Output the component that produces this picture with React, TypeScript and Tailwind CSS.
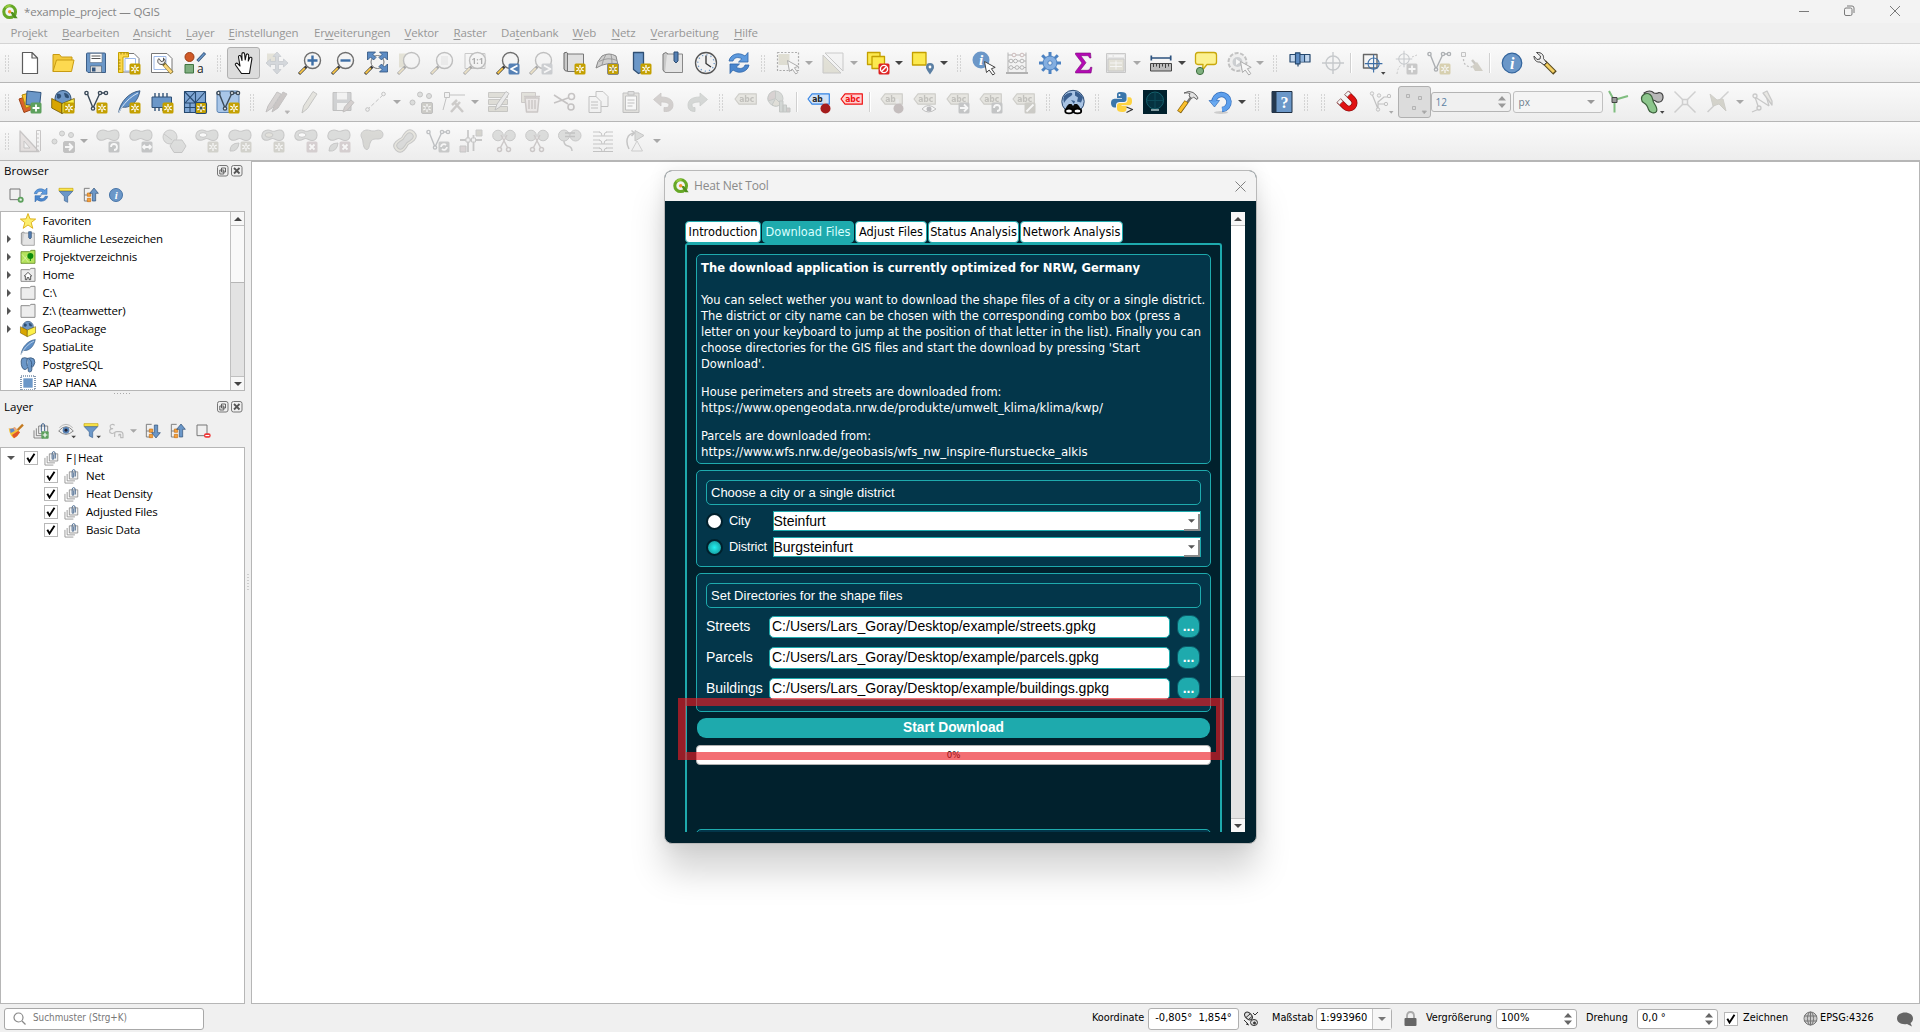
import React from "react";
import type { ReactNode } from "react";

/* ---------- icon primitives ---------- */

function Svg({ children, s = 24 }: { children?: ReactNode; s?: number }) {
  return (
    <svg width={s} height={s} viewBox="0 0 24 24" fill="none" strokeLinejoin="round" className="shrink-0 overflow-visible">
      {children}
    </svg>
  );
}

const Star = ({ c = "#c4a000" }: { c?: string }) => (
  <g>
    <rect x="12.5" y="12.5" width="11" height="11" rx="1.5" fill={c} />
    <path d="M18 14v8M14.3 16l7.4 4M21.7 16l-7.4 4" stroke="#fff" strokeWidth="1.3" />
    <circle cx="18" cy="18" r="1" fill={c} />
  </g>
);
const Badge = ({ c, d }: { c: string; d: string }) => (
  <g>
    <rect x="12.5" y="12.5" width="11" height="11" rx="1.5" fill={c} />
    <path d={d} stroke="#fff" strokeWidth="1.8" />
  </g>
);
const Lens = ({ children }: { children?: ReactNode }) => (
  <g>
    <path d="M1 23l7.5-7.5" stroke="#3a3a3a" strokeWidth="3" />
    <path d="M1.6 22.4l5.2-5.2" stroke="#fcc94a" strokeWidth="1.8" />
    <circle cx="14.5" cy="9.5" r="8" fill="#f4f4f4" stroke="#6e6e6e" strokeWidth="1.4" />
    {children}
  </g>
);
const Blob = () => (
  <path
    d="M.8 7C.8 3.500 3.500 1 7 1c2.500 0 3.500 1.200 5.500 1.200S16 1 18.500 1C21.500 1 23 3.500 23 6.200c0 3.300-2.300 5.300-5 5.300-2.800 0-4-2-6.500-2-2 0-3 1.800-5.500 1.800C3 11.300.8 9.800.8 7z"
    fill="#b4b8b4" stroke="#858585" strokeWidth="1.100"
  />
);
const Nodes = () => (
  <g stroke="#3b4a59" strokeWidth="1.4">
    <path d="M3 3l6 15L16 3h6" />
    <g fill="#fff">
      <circle cx="2.500" cy="3" r="1.6" />
      <circle cx="9" cy="18.500" r="1.6" />
      <circle cx="16" cy="3" r="1.6" />
      <circle cx="22" cy="3" r="1.6" />
    </g>
  </g>
);
const Box = () => (
  <g>
    <circle cx="12" cy="8.5" r="8" fill="#6f97c6" stroke="#2f4f74" />
    <path d="M6 4c3-1 5 1 4 3s-3 2-4 1zM13 3c3 0 5 2 5 4s-3 1-4 0z" fill="#2f4f74" />
    <path d="M.7 8.500L11 13.500v10L.7 18z" fill="#d8a500" stroke="#6d5500" strokeWidth=".8" />
    <path d="M23.300 8.500L11 13.500v10L23.300 18z" fill="#fcf04a" stroke="#6d5500" strokeWidth=".8" />
  </g>
);
const Feather = () => (
  <g>
    <path d="M1.500 23C3 12 12 2 23 .8 22 6 20 10 17 13c-4 4-9 5-12 4z" fill="#5f8fc6" stroke="#2f4f74" strokeWidth=".8" />
    <path d="M1.500 23C6 14 13 7 21 3" stroke="#dbe8f6" />
  </g>
);
const Tag = ({ t = "abc", f = "#d4cfb8", s = "#98947f", c = "#78745e" }: { t?: string; f?: string; s?: string; c?: string }) => (
  <g>
    <path d="M1 9l4-5.200h17.300v10.400H5z" fill={f} stroke={s} strokeWidth="1.200" />
    <text x="5.200" y="12" fontSize="8.500" fontWeight="700" fill={c} fontFamily="DejaVu Sans Condensed, sans-serif">{t}</text>
  </g>
);
const Pin = ({ c = "#a51c1c" }: { c?: string }) => (
  <g>
    <path d="M17 9l1.500 8" stroke="#ddd" strokeWidth="3" />
    <circle cx="18.500" cy="18.500" r="5" fill={c} />
  </g>
);
const Cursor = ({ x = 11, y = 9 }: { x?: number; y?: number }) => (
  <path transform={`translate(${x} ${y})`} d="M.5.500l2 11 2.700-2.500 3.600 5 2-1.400-3.400-4.900 3.800-1.300z" fill="#fff" stroke="#444" />
);
const Corner = () => <path d="M20 21h4.500L22.250 23.800z" fill="#444" />;
const Scissor = () => (
  <g stroke="#9a8888" strokeWidth="1.500">
    <circle cx="6" cy="6.500" r="5.300" fill="#b4b8b4" stroke="#858585" strokeWidth="1" />
    <circle cx="18" cy="6.500" r="5.300" fill="#b4b8b4" stroke="#858585" strokeWidth="1" />
    <path d="M8.500 18.500L15 6M15.500 18.500L9 6" />
    <circle cx="7.500" cy="20.500" r="2" />
    <circle cx="16.500" cy="20.500" r="2" />
  </g>
);
const Refresh = () => (
  <g>
    <path d="M2 10c1-6 9-10 16-5l3-3.500V11h-9.500l3.300-3.200C11 5.500 7 6.500 6 10z" fill="#5d9ade" stroke="#2e66aa" strokeWidth=".8" />
    <path d="M22 14c-1 6-9 10-16 5l-3 3.500V13h9.500l-3.300 3.200C13 18.500 17 17.500 18 14z" fill="#4a86cd" stroke="#2e66aa" strokeWidth=".8" />
  </g>
);
const Info = () => (
  <g>
    <circle cx="12" cy="12" r="9.800" fill="#6b97c8" stroke="#31639c" strokeWidth="1.200" />
    <text x="12.200" y="17.600" textAnchor="middle" fontSize="16" fontStyle="italic" fontWeight="700" fill="#fff" fontFamily="Liberation Serif, serif">i</text>
  </g>
);
const Target = ({ c = "#7c8a98" }: { c?: string }) => (
  <g stroke={c} strokeWidth="1.400">
    <circle cx="12" cy="12" r="7" />
    <path d="M12 1v22M1 12h22" />
  </g>
);

const I: Record<string, ReactNode> = {
  newFile: <path d="M4.500 1.500h9.500l5.500 5.500v15.500h-15zM14 1.500V7h5.500" fill="#fff" stroke="#5c5c5c" strokeWidth="1.200" />,
  open: (
    <g stroke="#c89b12" strokeWidth="1">
      <path d="M2 20.500V3.500h6.500l2 2.500H21v4" fill="#f3c93c" />
      <path d="M2 20.500L5.500 9H23l-2.500 11.500z" fill="#fdd950" />
    </g>
  ),
  save: (
    <g>
      <path d="M2.500 3q0-1 1-1h17q1 0 1 1v18.500H4l-1.500-1.500z" fill="#6b97c8" stroke="#3d5f88" />
      <path d="M6 2.500h12v9H6z" fill="#fff" stroke="#5e6f85" strokeWidth=".6" />
      <path d="M7.500 5h9M7.500 7.500h9" stroke="#555" />
      <path d="M6.500 15h11v6.500h-11z" fill="#dedede" stroke="#456" strokeWidth=".6" />
      <path d="M8 16.500h3.500v4H8z" fill="#34557d" />
    </g>
  ),
  layout: (
    <g>
      <path d="M2.500 2.500H17L22 7.500V21H2.500z" fill="#fff" stroke="#777" />
      <path d="M8 7.500h10.500V20H8z" stroke="#9db9e8" />
      <path d="M1.500 1.500h10v4.500h-5.500v15.500h-4.500z" fill="#fcd84a" stroke="#c4a000" />
      <path d="M4 1.500v2M7 1.500v2M10 1.500v2M1.500 9h2M1.500 12h2M1.500 15h2M1.500 18h2" stroke="#8a6d00" strokeWidth=".8" />
      <Star />
    </g>
  ),
  layouts: (
    <g>
      <path d="M1.500 2.500H17L22 7.500V21.500H1.500z" fill="#fff" stroke="#777" />
      <path d="M4 5.500h12v13H4z" stroke="#9db9e8" />
      <path d="M13 12l9 10" stroke="#7a6a2a" strokeWidth="4" />
      <path d="M14.500 14l7 7.500" stroke="#fcd87c" strokeWidth="2.600" />
      <path d="M9 7.500c-2 1.500-1.500 4.500.5 5.500s3.500.5 5-1 .5-4-1-5v3l-2.500.5z" fill="#eee" stroke="#555" />
    </g>
  ),
  style: (
    <g>
      <circle cx="6.500" cy="6" r="4.500" fill="#d05a28" stroke="#9c3c14" />
      <path d="M14.500 10L22 2" stroke="#31547d" strokeWidth="3" />
      <path d="M15 9.500L21.500 2.500" stroke="#6b97c8" strokeWidth="1.500" />
      <path d="M2 13.500h8.500V22H2z" fill="#7fae7f" stroke="#3f7440" />
      <text x="14" y="21.500" fontSize="12" fill="#222" fontFamily="Open Sans, sans-serif">a</text>
    </g>
  ),
  hand: (
    <path
      d="M9.500 22.500l-6-8.500c-.8-1.300 1-2.500 2.200-1.300L8 15 6.500 6c-.2-1.700 2-2.200 2.500-.5L10 9.500 9.900 3c0-1.800 2.500-1.900 2.700 0l.6 6 1-5c.4-1.700 2.700-1.300 2.500.5L16.300 10l1.200-3c.6-1.400 2.700-.8 2.400.8L18.500 16l-1 6.500z"
      fill="#fff" stroke="#111" strokeWidth="1.100"
    />
  ),
  panSel: (
    <g fill="#9fb0c4" stroke="#7c8ea5" strokeWidth=".8">
      <path d="M2 2.500h11.500V14H2z" fill="#cfc89a" stroke="none" />
      <path d="M12 1l4 4.500h-2.500v5h5V8l4.500 4-4.500 4v-2.500h-5v5H16L12 23l-4-4.500h2.500v-5h-5V16L1 12l4.500-4v2.500h5v-5H8z" />
    </g>
  ),
  zoomIn: <Lens><path d="M14.500 4.500v10M9.500 9.500h10" stroke="#3d6ea5" strokeWidth="2.400" /></Lens>,
  zoomOut: <Lens><path d="M9.500 9.500h10" stroke="#3d6ea5" strokeWidth="2.400" /></Lens>,
  zoomFull: (
    <g>
      <path d="M1 23l7.500-7.500" stroke="#3a3a3a" strokeWidth="3" />
      <path d="M1.600 22.400l5.200-5.200" stroke="#fcc94a" strokeWidth="1.800" />
      <circle cx="13.500" cy="11" r="6.500" fill="#f4f4f4" stroke="#777" />
      <g fill="#5d8cc4" stroke="#2d527e" strokeWidth=".8">
        <path d="M3.500 1h8L9 3.500l3 3-2.500 2.500-3-3L3.500 9z" />
        <path d="M23.500 1h-8L18 3.500l-3 3L17.500 9l3-3 3 3z" />
        <path d="M23.500 21h-8L18 18.500l-3-3 2.500-2.500 3 3 3-3z" />
      </g>
    </g>
  ),
  zoomSel: <g><path d="M2 2.500h11v14H2z" fill="#cfc68c" /><Lens /></g>,
  zoomLayer: <Lens><path d="M11 5h7v9h-7z" fill="#ddd" /></Lens>,
  zoomNative: (
    <g>
      <path d="M2 2.500h20v15H2z" stroke="#888" />
      <Lens><text x="14.500" y="13" textAnchor="middle" fontSize="8.500" fontWeight="700" fill="#444" fontFamily="Open Sans, sans-serif">1:1</text></Lens>
    </g>
  ),
  zoomLast: <g><Lens /><Badge c="#5580b4" d="M21.500 14.500L15 18l6.500 3.500" /></g>,
  zoomNext: <g><Lens /><Badge c="#8f9aa8" d="M15 14.500l6.500 3.500-6.500 3.500" /></g>,
  newMap: (
    <g>
      <path d="M2 2q3-2 4 1v17H3.500L2 18z" fill="#c9c9c9" stroke="#666" />
      <path d="M5.500 3h16v17.500h-16z" fill="#e0e0e0" stroke="#777" />
      <Star />
    </g>
  ),
  map3d: (
    <g stroke="#888">
      <path d="M7 5q7-4 14 0l2 9q-10-4-22 3 1-7 6-12z" fill="#cfcfcf" />
      <path d="M4 10.500q9-5 18-1M11 3.500Q8 8 7 14M16 3.500q1 4 1 9" strokeWidth=".7" />
      <Star />
    </g>
  ),
  bookmark: <g><path d="M5.500 1.500h10v19l-5 2-5-4z" fill="#6b97c8" stroke="#2f4f74" strokeWidth="1.300" /><Star /></g>,
  bookmarks: (
    <g>
      <path d="M2 3q3-3 5 0v18H3.500L2 19z" fill="#c9c9c9" stroke="#777" />
      <path d="M6 3h15.500v18.500H4" fill="#e4e4e4" stroke="#888" />
      <path d="M13 1h4v9l-2 2-2-2z" fill="#5580b4" stroke="#2f4f74" />
    </g>
  ),
  clock: (
    <g>
      <circle cx="12" cy="12" r="10.500" fill="#f1f1f1" stroke="#555" strokeWidth="1.300" />
      <circle cx="12" cy="12" r="8.200" stroke="#6b97c8" strokeWidth="1.300" strokeDasharray="1.200 3.100" />
      <path d="M12 4.500V12.500l5 3.500" stroke="#333" strokeWidth="1.300" />
    </g>
  ),
  refresh: <Refresh />,
  select: (
    <g>
      <path d="M1.500 1.500h21v18h-21z" stroke="#444" strokeWidth="1.200" strokeDasharray="2 1.500" />
      <path d="M2.500 3h11v11h-11z" fill="#c6be86" />
      <Cursor />
    </g>
  ),
  selectVal: (
    <g stroke="#888">
      <path d="M2 4v18h18z" fill="#cdc694" />
      <path d="M4 2h18v18z" fill="#f2f2f2" />
    </g>
  ),
  deselect: (
    <g>
      <path d="M1.500 1.500h12.500v12H1.500z" fill="#fce94f" stroke="#c4a000" strokeWidth="1.300" />
      <path d="M6 5.500h12.500v12H6z" fill="#fce94f" stroke="#c4a000" strokeWidth="1.300" />
      <rect x="12.500" y="12.500" width="11" height="11" rx="1.500" fill="#dd2222" />
      <circle cx="18" cy="18" r="3.600" stroke="#fff" strokeWidth="1.400" />
      <path d="M15.500 20.500l5-5" stroke="#fff" strokeWidth="1.400" />
    </g>
  ),
  selectLoc: (
    <g>
      <path d="M1.500 1.500H15v12.500H1.500z" fill="#fce94f" stroke="#c4a000" strokeWidth="1.300" />
      <path d="M19 23.500c-3-4.500-4-5.500-4-7.500a4 4 0 018 0c0 2-1 3-4 7.500z" fill="#5b7fa3" />
      <circle cx="19" cy="16" r="1.400" fill="#fff" />
    </g>
  ),
  identify: (
    <g>
      <circle cx="9" cy="9" r="8.500" fill="#6b97c8" />
      <text x="9" y="14" textAnchor="middle" fontSize="15" fontStyle="italic" fontWeight="700" fill="#fff" fontFamily="Liberation Serif, serif">i</text>
      <Cursor x={12} y={10} />
    </g>
  ),
  abacus: (
    <g stroke="#555">
      <path d="M3 1.500v20M21 1.500v20M3 4h18M3 10h18M3 16.500h18" />
      <path d="M1 22h22" strokeWidth="2" />
      <g fill="#f4f4f4">
        <ellipse cx="9" cy="4" rx="2" ry="1.800" stroke="#a55" /><ellipse cx="17" cy="4" rx="2" ry="1.800" stroke="#a55" />
        <ellipse cx="6" cy="10" rx="2" ry="1.800" /><ellipse cx="10.500" cy="10" rx="2" ry="1.800" /><ellipse cx="17" cy="10" rx="2" ry="1.800" />
        <ellipse cx="6" cy="16.500" rx="2" ry="1.800" /><ellipse cx="12" cy="16.500" rx="2" ry="1.800" /><ellipse cx="17" cy="16.500" rx="2" ry="1.800" />
      </g>
    </g>
  ),
  gear: (
    <g>
      <path d="M12 1v22M1 12h22M4.200 4.200l15.600 15.600M19.800 4.200L4.200 19.800" stroke="#4c82c2" strokeWidth="3" />
      <circle cx="12" cy="12" r="7" fill="#84aee0" stroke="#4c82c2" />
      <circle cx="12" cy="12" r="2.200" fill="#f3f3f3" stroke="#4c82c2" />
    </g>
  ),
  sigma: <path d="M4.500 2h15l.5 5h-1.500c-.5-1.800-1-2.300-3-2.300H9.800l5.200 7-5.800 7.600h6.800c2.200 0 2.900-1 3.500-3H21L20 22H4.500v-1.500l6.500-8.500-6.500-8.500z" fill="#b409b4" stroke="#7a0a7a" strokeWidth=".6" />,
  table: (
    <g stroke="#888">
      <path d="M2.500 2.500h19v19h-19z" fill="#d0d0d0" />
      <path d="M4 8h16v12H4z" fill="#cfc89a" />
      <path d="M6 12h12M6 15.500h12M12 9.500v9" strokeWidth=".9" stroke="#fff" />
      <path d="M4.500 5h4M10 5h10" stroke="#fff" strokeWidth="1.500" />
    </g>
  ),
  measure: (
    <g>
      <path d="M2 7h20M2.300 4.500v5M21.700 4.500v5" stroke="#2d527e" strokeWidth="1.700" />
      <path d="M1.500 12.500h21v7.500h-21z" fill="#bdbdbd" stroke="#444" />
      <path d="M4.500 13v3M7.500 13v2.500M10.500 13v4M13.500 13v2.500M16.500 13v4M19.500 13v2.500" stroke="#333" strokeWidth=".9" />
    </g>
  ),
  tip: (
    <g>
      <path d="M4 1.500h16q2.500 0 2.500 2.500v7q0 2.500-2.500 2.500h-7L8.500 19l.5-5.500H4Q1.500 13.500 1.500 11V4Q1.500 1.500 4 1.500z" fill="#fcf190" stroke="#c9a80c" strokeWidth="1.300" />
      <circle cx="6" cy="20" r="3.600" fill="#7fb07f" stroke="#3f6f40" />
    </g>
  ),
  run: (
    <g>
      <circle cx="10.500" cy="11" r="9" fill="#e6e6e6" stroke="#777" strokeWidth="2" strokeDasharray="4 1.600" />
      <circle cx="10.500" cy="11" r="5" fill="#8e9aa6" />
      <path d="M9 8l4.500 3L9 14z" fill="#fff" />
      <Cursor x={13} y={10} />
    </g>
  ),
  gps: (
    <g stroke="#26496f" strokeWidth="1.200">
      <path d="M2 3.500h20v7.500H2z" fill="#c3d7ee" />
      <path d="M16.500 3.500v7.500M10 12v3.500" />
      <path d="M13 4h3v6.500h-3z" fill="#8fb3dc" stroke="none" />
      <path d="M7.500 1.800h4.500v11H7.500z" fill="#5d8cc4" />
    </g>
  ),
  target: <Target />,
  targetBox: <g><path d="M2.500 3.500h13.500v13.500H2.500z" stroke="#666" strokeWidth="1.400" /><g transform="translate(3 3) scale(.8)"><Target c="#3d6ea5" /></g><Corner /></g>,
  targetAdd: <g><g transform="translate(1 -1) scale(.75)"><Target /></g><path d="M3 23q1-8 5-9M18 6l5-2" stroke="#888" strokeDasharray="2 1.500" /><Badge c="#8d8d8d" d="M18 14.500v7M14.500 18h7" /></g>,
  nodesStar: <g><Nodes /><Star /></g>,
  trackClean: (
    <g>
      <path d="M3.500 4v4q0 8 9 8" stroke="#777" strokeWidth="1.300" strokeDasharray="2 2" />
      <path d="M1.500 1.500h4v4h-4z" fill="#eee" stroke="#777" />
      <path d="M12 9l3.500 4" stroke="#8f8770" strokeWidth="2.500" />
      <path d="M12 15l5-4 6 9h-8z" fill="#a89c70" />
    </g>
  ),
  info: <Info />,
  wrench: (
    <g>
      <path d="M11 11l11 11" stroke="#57481c" strokeWidth="5" />
      <path d="M13 13l8 8" stroke="#f3cf63" strokeWidth="3" />
      <path d="M3.500 1.500l4 3.500-.5 3-3 .5-3-3.500c0 4 2.500 6.500 6 6l4 3 2.500-2.500-3-4c.5-3-1.500-6.500-7-6z" fill="#eee" stroke="#444" />
    </g>
  ),
  dataSrc: (
    <g>
      <path d="M1 9l9-3 5 13-9 3.500z" fill="#d9622b" stroke="#a04216" />
      <path d="M4 5l11-3v13L8 18z" fill="#fcc93a" stroke="#b08806" />
      <path d="M9 1l14 1.500-1.500 14L8 14.500z" fill="#6b97c8" stroke="#31547d" />
      <Badge c="#5da05d" d="M18 14.500v7M14.500 18h7" />
    </g>
  ),
  geopkg: <g><Box /><Star /></g>,
  shp: <g><Nodes /><Star /></g>,
  spatialite: <g><Feather /><Star /></g>,
  memory: (
    <g>
      <path d="M5 3v4M9 3v4M13 3v4M17 3v4M5 17v4M9 17v4M13 17v4M17 17v4" stroke="#26496f" strokeWidth="1.300" />
      <path d="M2 7h19.500v10.500H2z" fill="#6b97c8" stroke="#2f4f74" />
      <Star />
    </g>
  ),
  mesh: (
    <g stroke="#26496f" strokeWidth="1.100">
      <path d="M1.500 1.500h21v21h-21z" fill="#7fa6d4" />
      <path d="M1.500 13h21M12.500 1.500v21M2 2l10.500 11M12 2L2 13M13 12L22 2M7 13v9M1.500 17.500H13" />
      <Star />
    </g>
  ),
  virtual: <g><rect x="1" y="1" width="22" height="21.500" rx="2" fill="#a9c6e8" stroke="#5b83b3" /><Nodes /><Star /></g>,
  pencils: (
    <g stroke="#7d7474">
      <path d="M1 22L3 16 12 2l4 2-9 14z" fill="#b0a09c" />
      <path d="M7 22l2-6 9-14 4 2-9 14z" fill="#98827e" />
      <Corner />
    </g>
  ),
  pencil: <path d="M4 23l1.500-7L15 1.500l4 2.500-9.500 14.500z" fill="#d0ccb0" stroke="#7d7d74" />,
  saveEdit: (
    <g>
      <path d="M2 2.500h18v18H2z" fill="#9a9fa5" stroke="#777" />
      <path d="M6 2.500h10v7H6zM6 13h10v7H6z" fill="#eee" />
      <path d="M12 22l1.500-5 6.500-7 3 2.500-6.500 7.500z" fill="#b09a94" stroke="#7d7474" />
    </g>
  ),
  line: <g stroke="#777"><path d="M3 20L20 4" strokeDasharray="4 2" /><circle cx="3.500" cy="19.500" r="1.800" fill="#eee" /><circle cx="19.500" cy="4" r="1.800" fill="#eee" /></g>,
  points: <g fill="#b8bcb8" stroke="#777"><circle cx="3.500" cy="12.500" r="2.500" /><circle cx="11" cy="4.500" r="2.500" /><circle cx="20" cy="6" r="2.500" /><Star c="#98947c" /></g>,
  vertex: <g stroke="#777"><path d="M5 5L1 20M5 5h18" /><path d="M2.500 2.500h5v5h-5z" fill="#eee" /><path d="M9 22l9-10M12 12l9 10M10 15l5-5" strokeWidth="2.500" stroke="#999088" /></g>,
  attrs: <g stroke="#88867a"><path d="M1.500 2.500h19v5h-19zM1.500 9.500h19v5h-19zM1.500 16.500h19v5h-19z" fill="#c2bd9c" /><path d="M8 20l2-6L19 1.500l3 2L13 17z" fill="#ddd" stroke="#777" /></g>,
  trash: <g stroke="#9a8883"><path d="M1.500 2.500h14v10h-14z" fill="#c9c4a6" /><path d="M5 8h14l-1.500 14h-11z" fill="#e4d4d2" strokeWidth="1.500" /><path d="M4 6.500h16M9 10v9M12 10v9M15 10v9" strokeWidth="1.500" /></g>,
  cut: <g stroke="#857a7a" strokeWidth="1.600"><path d="M1 5l14 9M1 13l14-5" /><circle cx="18.500" cy="6.500" r="3" /><circle cx="18" cy="17" r="3" /></g>,
  copy: <g stroke="#777" fill="#f2f2f2"><path d="M10 1.500h7l5 5v10H10z" /><path d="M3 6.500h7l5 5v11H3z" /><path d="M5 12h7M5 15h7M5 18h7" /></g>,
  paste: <g stroke="#777"><path d="M4 3h16v19.500H4z" fill="#ccc8b8" /><path d="M6.500 6h11v14h-11z" fill="#fff" /><path d="M9 1.500h6v3.500H9z" fill="#bbb" /><path d="M8.500 10h7M8.500 13h7M8.500 16h5" /></g>,
  undo: <path d="M1.500 9.500L9 3v4c8 0 12 3 12 8s-4 7-9 6.500v-4c3 .5 5-.5 5-2.500s-3-3-8-3v4z" fill="#aa9a94" stroke="#94857f" strokeWidth=".8" />,
  redo: <path d="M22.500 9.500L15 3v4C7 7 3 10 3 15s3 6.500 7 6.500v-4c-2 .5-3-.5-3-2.500s3-3 8-3v4z" fill="#a3b0a8" stroke="#8a968e" strokeWidth=".8" />,
  tag: <Tag />,
  pie: <g stroke="#7a8a80"><circle cx="8.500" cy="8.500" r="7.500" fill="#a8b4a8" /><path d="M8.500 8.500V1A7.500 7.500 0 001.300 11z" fill="#b89a9a" /><path d="M8.500 8.500L14 14a7.500 7.500 0 01-9 1z" fill="#c8c2a0" /><path d="M12.500 11h3.500v11h-3.500zM16 15h3.500v7H16z" fill="#9cb0a6" /><path d="M19.500 18H23v4h-3.500z" fill="#b09494" /></g>,
  tagPin: <g><Tag t="ab" f="#cfe2fa" s="#3584e4" c="#222" /><Pin /></g>,
  tagRed: <Tag f="#ffd0d0" s="#ee1111" c="#ee1111" />,
  tagG1: <g><Tag t="ab" /><Pin c="#8f7070" /></g>,
  tagG2: <g><Tag /><path d="M9 19q6-7 14 0-8 6-14 0z" fill="#fff" stroke="#777" /><circle cx="16" cy="19" r="2.500" fill="#667" /></g>,
  tagG3: <g><Tag /><Badge c="#7f8488" d="M14 18h7M18 14.500l3.500 3.500-3.500 3.500" /></g>,
  tagG4: <g><Tag /><Badge c="#7f8488" d="M15 18a3 3 0 113 3" /></g>,
  tagG5: <g><Tag /><Badge c="#98947c" d="M14.500 21.500l7-7" /></g>,
  globe: (
    <g>
      <circle cx="12" cy="11.500" r="11.200" fill="#a9c4e4" stroke="#2b4a72" />
      <path d="M3 6q4-4 8-3 1 2-1 3t-4 3-3 4q-1.500-4 0-7zM14 1.500q5 1 8 6l-2 5-4-1 1-4-3-2zM10 10l4 1-1 3z" fill="#3a5f8f" />
      <path d="M4 21q1-5 4-7h2.500l1.500 2 1.500-2H16q3 2 4 7z" fill="#0a0a0a" />
      <ellipse cx="8" cy="21" rx="3.800" ry="2.400" fill="#fff" stroke="#000" strokeWidth="1.700" />
      <ellipse cx="16.500" cy="21" rx="3.800" ry="2.400" fill="#fff" stroke="#000" strokeWidth="1.700" />
    </g>
  ),
  python: (
    <g>
      <path d="M11 2c-4 0-4 1.500-4 3.500V8h5v.8H4.500C2 8.800 1 11 1 13s1 4.500 3 4.500h2V15c0-2 1.500-3 3.500-3H14c1.500 0 2.500-1 2.500-2.500V5c0-2-2-3-5.500-3z" fill="#3a76ab" />
      <path d="M12 22c4 0 4.500-1.500 4.500-3.500V16h-5v-.8H19c2.500 0 3-2 3-4s-.5-4-2.500-4h-2v2.500c0 2-1 3.300-3.500 3.300H9.500C8 13 7 14 7 15.500V19c0 2 2 3 5 3z" fill="#fdd341" />
      <circle cx="9.500" cy="5" r="1" fill="#fff" />
      <path d="M16.500 17l6 2.500-6 3" stroke="#333" strokeWidth="1.200" />
    </g>
  ),
  fheat: (
    <g>
      <path d="M0 0h24v24H0z" fill="#01212d" />
      <circle cx="12" cy="10.500" r="8.500" fill="#053240" stroke="#15606c" />
      <path d="M12 2v17M4 10.500h16" stroke="#0c4a58" />
      <path d="M8 20h8" stroke="#c8dde0" strokeWidth="1.300" />
    </g>
  ),
  hammer: (
    <g>
      <path d="M4 22.500L16 6" stroke="#777" strokeWidth="2.500" />
      <path d="M3 22L10.500 11.500" stroke="#8a6200" strokeWidth="4.600" />
      <path d="M3.400 21.400L10.200 12" stroke="#fbc02d" strokeWidth="3.200" />
      <path d="M8 3q5-3 9-.5l3 2.500 2 3-1 1.500-3.500-2.500-1.500 1.500-3-2.500 1-2.500q-2-1-6-.5z" fill="#e3e3e3" stroke="#666" />
    </g>
  ),
  reload: (
    <g>
      <ellipse cx="12" cy="22.500" rx="7" ry="1.500" fill="#ccc" />
      <path d="M5 12.500A7.500 7.500 0 1113 19.500" stroke="#2f6ab8" strokeWidth="5.400" />
      <path d="M0 10.500h10.500L5.500 17z" fill="#6aaaf0" stroke="#2f6ab8" strokeWidth=".7" />
      <path d="M5 12A7.500 7.500 0 1113 19.500" stroke="#5d9fec" strokeWidth="4.200" />
    </g>
  ),
  help: (
    <g>
      <path d="M2 1.500h20v21H2z" fill="#6b97c8" stroke="#1e2e42" />
      <path d="M2 1.500h4.500v21H2z" fill="#24384f" />
      <text x="14.500" y="17.500" textAnchor="middle" fontSize="16" fontWeight="700" fill="#fff" fontFamily="Liberation Serif, serif">?</text>
    </g>
  ),
  magnet: (
    <g transform="translate(1 1) rotate(-45 12 12)">
      <path d="M6.500 3v9a5.500 5.500 0 0011 0V3" stroke="#8d0f0f" strokeWidth="6" />
      <path d="M6.500 3.500v8.500a5.500 5.500 0 0011 0V3.500" stroke="#e01212" strokeWidth="4.600" />
      <path d="M4 3h5v3.500H4zM15 3h5v3.500h-5z" fill="#f4f4f4" stroke="#8a6a6a" strokeWidth=".7" />
    </g>
  ),
  snapAll: <g><path d="M3 4l6 15v-7l6-5h7M9 14h8" stroke="#777" strokeWidth="1.200" /><g fill="#eee" stroke="#777"><circle cx="3" cy="3.500" r="1.700" /><circle cx="10" cy="5.500" r="1.700" /><circle cx="20" cy="6" r="1.700" /><circle cx="17" cy="14" r="1.700" /><circle cx="9" cy="19.500" r="1.700" /></g><Corner /></g>,
  snapPts: <g fill="#d4d4d4" stroke="#777"><path d="M4.500 4.500h3v3h-3zM16.500 6.500h3v3h-3zM10.500 16.500h3v3h-3z" /><Corner /></g>,
  topo: (
    <g>
      <path d="M2 1l5 9M7 10l14-4M7.500 10v12.500" stroke="#7fbd7f" strokeWidth="2" />
      <path d="M5 7.500h5v5H5z" fill="#999" stroke="#444" />
    </g>
  ),
  overlap: (
    <g strokeWidth="1.200">
      <path d="M4 3q6-4 10 0 3 1 5-.5 4.500.5 4 5.500-1 5-6 4-2-2-5-2z" fill="#b8b8b8" stroke="#444" />
      <path d="M1.500 9c-.5-4 5-7 8.500-4.500S12 10 14 13s4 6 2.500 8.500-7 1.500-8-2S6 14 4 13s-2.500-2-2.500-4z" fill="#8cc68c" stroke="#3b5f3b" />
      <Corner />
    </g>
  ),
  cross: <g stroke="#999" strokeWidth="1.500"><path d="M1.500 1.500l21 21M22.500 1.500l-21 21" /><path d="M9.500 9.500h5v5h-5z" fill="#eee" /></g>,
  selfSnap: <g stroke="#999"><path d="M1.500 22L22.500 1.500" strokeWidth="1.500" /><path d="M4 4l7 6 6-1 3 12-7-7-6 2z" fill="#a8a47c" stroke="#98947c" /></g>,
  trace: <g stroke="#888" strokeWidth="1.300"><path d="M4 7l14 9M4 7l4 12-7 3M18 16l-3-11" /><circle cx="4" cy="6" r="2" fill="#eee" /><circle cx="8" cy="18" r="2" fill="#eee" /><path d="M12 3l4-2 5 10v4z" fill="#d6d2bc" /></g>,
  ruler: <g stroke="#8a8080"><path d="M2 2l19 20.500H2z" fill="#d8c4c0" strokeWidth="1.300" /><path d="M6 12l6 7H6z" fill="#f4f4f4" /><path d="M18.500 22V1.500h4V22M19 5h2M19 9h2M19 13h2M19 17h2" /></g>,
  ptsMove: <g fill="#b8bcb8" stroke="#808080"><circle cx="3.500" cy="12.500" r="2.500" /><circle cx="11" cy="4.500" r="2.500" /><circle cx="20" cy="6" r="2.500" /><Badge c="#7d7d7d" d="M14 18h7M18 14.500l3.500 3.500-3.500 3.500" /></g>,
  blobRot: <g><Blob /><Badge c="#7f8488" d="M15 18a3 3 0 113 3" /></g>,
  blobScale: <g><Blob /><Badge c="#7f8488" d="M14 18h8M16 16l-2 2 2 2M20 16l2 2-2 2" /></g>,
  simplify: <g stroke="#858585" fill="#bcc0bc"><circle cx="8" cy="8" r="7" /><path d="M2 5l8 6M12 11h8l4 6-4 6.500h-8L8 17z" /></g>,
  ring: <g><Blob /><ellipse cx="8" cy="6" rx="4" ry="2.300" fill="#fff" stroke="#858585" /><Star c="#a8a488" /></g>,
  part: <g><Blob /><path d="M2 22q0-8 9-8-1 9-9 8z" fill="#b4b8b4" stroke="#858585" /><Star c="#a8a488" /></g>,
  fill: <g><Blob /><ellipse cx="8" cy="6" rx="4" ry="2.300" fill="#c8c4a8" stroke="#858585" /><Star c="#a8a488" /></g>,
  delRing: <g><Blob /><ellipse cx="8" cy="6" rx="4" ry="2.300" fill="#fff" stroke="#858585" /><Badge c="#b8989e" d="M15.500 15.500l5 5M20.500 15.500l-5 5" /></g>,
  delPart: <g><Blob /><path d="M2 22q0-8 9-8-1 9-9 8z" fill="#b4b8b4" stroke="#858585" /><Badge c="#b8989e" d="M15.500 15.500l5 5M20.500 15.500l-5 5" /></g>,
  reshape: <path d="M1 6.500C1 3 4 1 7 1c2.500 0 3.500 1 6 1s3-.8 5.500-.8c3 0 4.500 2 4.500 4.300 0 3-2 4.500-5 4.500-4 0-6 0-7.500 3S9.500 20 7 20.500 3 16 3 13s-2-4-2-6.500z" fill="#b0b0a0" stroke="#858585" />,
  offset: <g transform="rotate(-45 12 12)"><path d="M-1 12q0-6 6-6 3 0 7 1.300Q16 6 19 6q6 0 6 6t-6 6q-3 0-7-1.300Q8 18 5 18q-6 0-6-6z" fill="#d4d0ae" stroke="#858585" /><path d="M2 12q0-3.500 3.500-3.500 3 0 6.500 1 3.500-1 6.500-1Q22 8.500 22 12t-3.500 3.500q-3 0-6.500-1-3.500 1-6.500 1Q2 15.500 2 12z" fill="#b4b8b4" stroke="#858585" /></g>,
  reverse: <g opacity=".75"><Nodes /><Badge c="#666c70" d="M15 18a3 3 0 015-2M21 18a3 3 0 01-5 2" /></g>,
  trim: <g stroke="#888"><path d="M9 1v22M14.500 6v16M1 11h22" strokeWidth="1.800" /><path d="M7 9h4v4H7zM12.500 9h4v4h-4z" fill="#eee" /><path d="M17 1h6v6h-6z" fill="#a8a488" /><path d="M1 17h6v6H1z" fill="#c2a8ac" /></g>,
  split: <Scissor />,
  merge: <g stroke="#858585"><circle cx="6" cy="6.500" r="5.500" fill="#b4b8b4" /><circle cx="17.500" cy="6.500" r="5.500" fill="#b4b8b4" /><path d="M7 4h10M7 7.500h10" strokeWidth="1.500" stroke="#777" /><path d="M6 12q0 4 4 5t4 5" strokeWidth="1.500" /></g>,
  align: <g stroke="#808080"><path d="M2 3h7M15 3h7M2 7h20M2 11h7M15 11h7M2 15h20M2 19h7M15 19h7M2 22.500h20" /><path d="M8 3q3 0 3 4M16 3q-3 0-3 4M8 11q3 0 3 4M16 11q-3 0-3 4M8 19q3 0 3 3.500M16 19q-3 0-3 3.500" /></g>,
  rotate: <g stroke="#808080"><path d="M5 20C1 12 3 5 10 4M7.500 1.500L10.500 4 7.500 7" strokeWidth="1.500" /><path d="M11 1.500l9 5-9 5.500z" fill="#b4b8b4" /><path d="M13 12l5.500 10h-11z" fill="#f0f0f0" strokeWidth=".8" /></g>,
  /* panel icons */
  addBox: <g><path d="M3 3h15v16H3z" stroke="#777" strokeWidth="1.500" /><circle cx="19" cy="19" r="4.500" fill="#5da05d" /><circle cx="19" cy="19" r="1.800" fill="#e8f4e8" /></g>,
  delBox: <g><path d="M3 3h15v16H3z" stroke="#777" strokeWidth="1.500" /><rect x="13.500" y="15.500" width="10" height="6.500" rx="3" fill="#e33" /><path d="M15.500 18.800h6" stroke="#fff" strokeWidth="1.700" /></g>,
  funnel: <g><path d="M1.500 2h21v4H1.500z" fill="#fce94f" stroke="#c4a000" /><path d="M2 6.500h20l-7.500 8V23l-5-2.500v-6z" fill="#6b97c8" stroke="#3d6492" /></g>,
  collapse: <g><path d="M2 2v19h6M2 12h6" stroke="#777" strokeWidth="1.400" /><path d="M6.500 9h5v5h-5zM6.500 17h5v5h-5z" fill="#f5a13c" stroke="#c86f10" /><path d="M2 2h8" stroke="#777" strokeWidth="1.400" /><path d="M16.500 1.500l6.500 8h-4V21h-5V9.500h-4z" fill="#6b97c8" stroke="#2f4f74" /></g>,
  expand: <g><path d="M2 2v19h6M2 12h6" stroke="#777" strokeWidth="1.400" /><path d="M6.500 9h5v5h-5zM6.500 17h5v5h-5z" fill="#f5a13c" stroke="#c86f10" /><path d="M2 2h8" stroke="#777" strokeWidth="1.400" /><path d="M16.500 22.500l6.500-8h-4V3h-5v11.500h-4z" fill="#6b97c8" stroke="#2f4f74" /></g>,
  brush: <g><path d="M13 12l9.500-9.500" stroke="#c47a20" strokeWidth="3.500" /><path d="M1 8q5 1 9-2l8 8q-4 7-9 9-6-3-8-15z" fill="#f4c430" /><path d="M2 8q5 1 8-2l4 4-10 5z" fill="#e9a58a" /><path d="M3 9q3 0 5-1l2 4-6 3z" fill="#5d8cc4" /><path d="M6 18l9-6 3 2q-4 7-9 9z" fill="#e0562a" /></g>,
  group: (
    <g strokeWidth="1.300">
      <path d="M1.500 11v11.500H15" stroke="#888" />
      <path d="M5 8v11h12.500" stroke="#888" />
      <path d="M8.500 4.500h13.500v11.500H8.500z" fill="#f2f2f2" stroke="#888" />
      <path d="M18 12V4.500Q18 1 15.500 1T13 4.500v7q0 2 1.300 2t1.300-2V5.500" stroke="#3d5f88" strokeWidth="1.500" />
    </g>
  ),
  groupAdd: (
    <g strokeWidth="1.300">
      <path d="M1.500 11v11.500H15" stroke="#777" />
      <path d="M5 8v11h12.500" stroke="#777" />
      <path d="M8.500 4.500h13.500v11.500H8.500z" fill="#f2f2f2" stroke="#777" />
      <path d="M17.500 12V4.500Q17.500 1 15 1t-2.500 3.500v7q0 2 1.300 2" stroke="#3d5f88" strokeWidth="1.500" />
      <Badge c="#5da05d" d="M18 14.500v7M14.500 18h7" />
    </g>
  ),
  eye: <g><path d="M1 12Q12-1 23 12 12 22 1 12z" fill="#eee" stroke="#888" strokeWidth="1.500" /><circle cx="12" cy="11" r="5" fill="#5580b4" /><circle cx="12" cy="11" r="2.200" fill="#223" /><path d="M2 7Q12-3 22 7" stroke="#aaa" strokeWidth="1.200" /><path d="M20 19h7l-3.500 4z" fill="#444" /></g>,
  funnelMore: <g><path d="M1.500 1h21v4H1.500z" fill="#fce94f" stroke="#c4a000" /><path d="M2 5.500h20l-7.500 8V22l-5-2.500v-6z" fill="#6b97c8" stroke="#3d6492" /><path d="M20 19h7l-3.500 4z" fill="#444" /></g>,
  epsilon: <g stroke="#999" strokeWidth="1.700"><path d="M10 3.500Q8 1.500 5 2.500T4 7.500q1 1 3 1Q3 8.500 2.500 11.500T5 15.500t5-2" /><path d="M10 21v-5q0-3 3-3h5q4.500 0 4.500 4.500V22H19v-5h-2.500v3" /></g>,
  fav: <path d="M12 .8l3 8 8.500.3-6.700 5.300L19.200 23 12 18l-7.200 5 2.400-8.600L.5 9.100 9 8.800z" fill="#fcee6e" stroke="#d9a90c" strokeWidth="1.300" />,
  proj: <g><path d="M1.500 4h13l2-2h6v19.500h-21z" fill="#b5e35c" stroke="#6a8f2a" strokeWidth="1.300" /><path d="M3 19L14 7M3 8l10 12" stroke="#e6f7c0" /><circle cx="15.500" cy="10.500" r="4.500" fill="#0b8a0b" /><path d="M15.500 11v7" stroke="#0b8a0b" strokeWidth="1.500" /></g>,
  folder: <path d="M1.500 4h13l2-2h6v19.500h-21z" fill="#ededed" stroke="#8c8c8c" strokeWidth="1.500" />,
  home: <g><path d="M1.500 4h13l2-2h6v19.500h-21z" fill="#ededed" stroke="#8c8c8c" strokeWidth="1.500" /><path d="M6.500 13.500L12 8l5.500 5.500H16V19h-2.500v-3h-3v3H8v-5.500z" stroke="#333" strokeWidth="1.200" fill="#fff" /></g>,
  box: <Box />,
  feather: <Feather />,
  pg: <path d="M3 2q4-2 8 0 6-2 10 1 3 5-1 11l-1.500 1h-1q1 3-.5 6.500-3 2-4.500 0l-.5-6-2 2q-2 2-4 1-3-1-4-7T3 2zM11 2q-2 6 0 12M14 3q5 4 3 12" fill="#6b97c8" stroke="#2f4f74" strokeWidth="1.200" />,
  hana: <g><path d="M1.500 1.500h21v21h-21z" stroke="#31547d" strokeWidth="1.800" strokeDasharray="1.500 1.500" /><path d="M5 5h14v14H5z" fill="#6b97c8" /></g>,
};

const QLogo = ({ s }: { s: number }) => (
  <Svg s={s}>
    <circle cx="11.500" cy="11.500" r="8.800" stroke="#66a826" strokeWidth="4.600" />
    <path d="M5 5.500a9 9 0 018-2.800" stroke="#93c93c" strokeWidth="3" />
    <path d="M12 12h4.500l7 9.500h-5z" fill="#4f8f1e" />
    <circle cx="11.500" cy="11.500" r="2.600" fill="#f3962c" />
  </Svg>
);

/* ---------- toolbar pieces ---------- */

const Arrow = ({ off }: { off?: boolean }) => (
  <span className="flex w-3 shrink-0 items-center justify-center">
    <svg width="8" height="4" viewBox="0 0 8 4" className="-ml-0.5"><path d="M0 0h8L4 4z" fill={off ? "#a8a8a8" : "#444"} /></svg>
  </span>
);
const Handle = ({ wide }: { wide?: boolean }) => (
  <span className={wide ? "flex w-[16.800px] shrink-0 items-center justify-center" : "flex w-4 shrink-0 items-center justify-center"}>
    <svg width="5" height="17" viewBox="0 0 5 17">
      <path d="M.5.500v17M3.500.500v17" stroke="#b4b4b4" strokeDasharray="1 2" />
    </svg>
  </span>
);
const Sep = () => <span className="ml-px mr-1 h-5 w-0.5 shrink-0 border-l border-[#d0d0d0] bg-white" />;

/* Tokens: "|" handle, "/" separator; "!" prefix = disabled, ">" suffix = drop-down arrow, "#" prefix = pressed. */
function Tools({ spec }: { spec: string }) {
  return (
    <>
      {spec.split(" ").map((tok, i) => {
        if (tok === "|") return <Handle key={i} />;
        if (tok === "/") return <Sep key={i} />;
        const off = tok.includes("!");
        const on = tok.includes("#");
        const name = tok.replace(/[!#>]/g, "");
        return (
          <React.Fragment key={i}>
            <span className={on ? "flex h-8 w-[33px] shrink-0 items-center justify-center rounded-[3px] border border-[#b0b0b0] bg-[#dcdcdc]" : "flex h-8 w-[33px] shrink-0 items-center justify-center"}>
              <span className={off ? "opacity-40 saturate-50" : ""}><Svg>{I[name]}</Svg></span>
            </span>
            {tok.includes(">") && <Arrow off={off} />}
          </React.Fragment>
        );
      })}
    </>
  );
}

const Bar = ({ children }: { children: ReactNode }) => (
  <div className="flex h-[39px] shrink-0 items-center border-b border-[#b6b6b6] bg-linear-to-b from-[#fafafa] to-[#ededed] pl-1">
    <span className="mr-1 flex w-[5px] shrink-0"><svg width="5" height="17" viewBox="0 0 5 17"><path d="M1.500.500v17M4.500.500v17" stroke="#b4b4b4" strokeDasharray="1 2" /></svg></span>
    {children}
  </div>
);

const MENU: [string, number, string][] = [
  ["Projekt", 3, "w-[51.500px]"], ["Bearbeiten", 0, "w-[71px]"], ["Ansicht", 0, "w-[53px]"], ["Layer", 0, "w-[42.500px]"],
  ["Einstellungen", 0, "w-[85.500px]"], ["Erweiterungen", 2, "w-[90.500px]"], ["Vektor", 0, "w-[49px]"], ["Raster", 0, "w-[47.500px]"],
  ["Datenbank", 2, "w-[71.500px]"], ["Web", 0, "w-[39px]"], ["Netz", 0, "w-[39px]"], ["Verarbeitung", 0, "w-[83.500px]"], ["Hilfe", 0, "w-[40px]"],
];

const UpDown = ({ off }: { off?: boolean }) => (
  <svg width="8" height="12" viewBox="0 0 8 12"><path d="M4 0l4 4.500H0zM0 7.500h8L4 12z" fill={off ? "#999" : "#666"} /></svg>
);

/* ---------- docks ---------- */

const DockTitle = ({ t }: { t: string }) => (
  <div className="flex h-5 items-center pl-1 pr-[2px]">
    <span className="flex-1 text-[11.500px] text-black">{t}</span>
    <svg width="26" height="12" viewBox="0 0 26 12" fill="none" stroke="#555">
      <rect x=".5" y=".5" width="10.500" height="10.500" rx="2" stroke="#777" />
      <path d="M4.500 3h4v4h-4zM2.800 5h4v4h-4z" fill="#f0f0f0" strokeWidth=".9" />
      <rect x="14.500" y=".5" width="10.500" height="10.500" rx="2" stroke="#777" />
      <path d="M17 3l5.500 5.500M22.500 3L17 8.500" strokeWidth="1.800" />
    </svg>
  </div>
);

const TREE: [string, string, boolean][] = [
  ["fav", "Favoriten", false], ["bookmarks", "Räumliche Lesezeichen", true], ["proj", "Projektverzeichnis", true], ["home", "Home", true],
  ["folder", "C:\\", true], ["folder", "Z:\\ (teamwetter)", true], ["box", "GeoPackage", true], ["feather", "SpatiaLite", false],
  ["pg", "PostgreSQL", false], ["hana", "SAP HANA", false],
];

const Check = () => (
  <span className="flex size-[14px] shrink-0 items-center justify-center border border-[#b8b8b8] bg-white">
    <svg width="10" height="10" viewBox="0 0 10 10" fill="none" stroke="#000" strokeWidth="1.900"><path d="M1.300 4.800l2.200 3.700L8.500.8" /></svg>
  </span>
);

const ScrollArrow = ({ down }: { down?: boolean }) => (
  <span className={down ? "flex h-[14px] shrink-0 items-center justify-center border-t border-[#c0c0c0] bg-[#f7f7f7]" : "flex h-[14px] shrink-0 items-center justify-center border-b border-[#c0c0c0] bg-[#f7f7f7]"}>
    <svg width="8" height="4" viewBox="0 0 8 4"><path d={down ? "M0 0h8L4 4z" : "M4 0l4 4H0z"} fill="#444" /></svg>
  </span>
);

function Docks() {
  return (
    <aside className="flex w-[245px] shrink-0 flex-col">
      <DockTitle t="Browser" />
      <div className="flex h-[30px] items-center gap-[9px] pb-0.5 pl-2">
        {["addBox", "refresh", "funnel", "collapse", "info"].map((n) => <Svg key={n} s={16}>{I[n]}</Svg>)}
      </div>
      <div className="flex h-[180px] border border-[#b6b6b6] bg-white">
        <div className="flex-1 overflow-hidden">
          {TREE.map(([ic, t, ex]) => (
            <div key={t} className="flex h-[18px] items-center pl-[6px] text-[11.500px] tracking-[-0.180px] text-black">
              <span className="w-[13px]">{ex && <svg width="4" height="8" viewBox="0 0 4 8"><path d="M0 0v8l4-4z" fill="#555" /></svg>}</span>
              <Svg s={16}>{I[ic]}</Svg>
              <span className="ml-[6.500px] whitespace-nowrap">{t}</span>
            </div>
          ))}
        </div>
        <div className="flex w-[14px] flex-col border-l border-[#c0c0c0] bg-[#e3e3e3]">
          <ScrollArrow />
          <div className="h-[57px] border-b border-[#b6b6b6] bg-[#f9f9f9]" />
          <div className="flex-1" />
          <ScrollArrow down />
        </div>
      </div>
      <div className="flex h-[6px] shrink-0 items-start justify-center pt-0.5">
        <svg width="17" height="1" viewBox="0 0 17 1"><path d="M0 .5h17" stroke="#aaa" strokeDasharray="1 2" /></svg>
      </div>
      <DockTitle t="Layer" />
      <div className="flex h-[30px] items-center pb-0.5 pl-2">
        {["brush", "groupAdd", "eye", "funnelMore"].map((n) => <span key={n} className="w-[25px]"><Svg s={16}>{I[n]}</Svg></span>)}
        <span className="flex w-[37px] items-center opacity-60"><Svg s={16}>{I.epsilon}</Svg><svg width="7" height="4" viewBox="0 0 8 4" className="ml-[6px]"><path d="M0 0h8L4 4z" fill="#777" /></svg></span>
        {["expand", "collapse", "delBox"].map((n) => <span key={n} className="w-[25px]"><Svg s={16}>{I[n]}</Svg></span>)}
      </div>
      <div className="flex-1 border border-[#b6b6b6] bg-white pt-px text-[11.500px] tracking-[-0.180px] text-black">
        <div className="flex h-[18px] items-center pl-[6px]">
          <svg width="8" height="4" viewBox="0 0 8 4" className="mr-[9px]"><path d="M0 0h8L4 4z" fill="#555" /></svg>
          <Check />
          <span className="ml-[6px] mr-[7px]"><Svg s={15}>{I.group}</Svg></span>F|Heat
        </div>
        {["Net", "Heat Density", "Adjusted Files", "Basic Data"].map((t) => (
          <div key={t} className="flex h-[18px] items-center pl-[43px]">
            <Check />
            <span className="ml-[6px] mr-[7px]"><Svg s={15}>{I.group}</Svg></span>{t}
          </div>
        ))}
      </div>
    </aside>
  );
}

/* ---------- dialog ---------- */

const TABS: [string, string][] = [
  ["Introduction", "w-[76px]"], ["Download Files", "w-[92px]"], ["Adjust Files", "w-[72px]"], ["Status Analysis", "w-[91px]"], ["Network Analysis", "w-[103px]"],
];

const Header = ({ t }: { t: string }) => (
  <div className="flex h-[25px] items-center rounded-[5px] border border-[#1eaaad] pl-1 font-['Liberation_Sans',sans-serif] text-[13px] text-white">{t}</div>
);

function Combo({ label, value, on }: { label: string; value: string; on?: boolean }) {
  return (
    <div className="flex h-5 items-center font-['Liberation_Sans',sans-serif]">
      <span className={on ? "size-[17px] shrink-0 rounded-full border-2 border-[#01202c] bg-radial from-[#22f0f0] to-[#158c90]" : "size-[17px] shrink-0 rounded-full border-2 border-[#01202c] bg-white"} />
      <span className="ml-[6px] w-[43.500px] text-[12.800px] tracking-[-0.150px] text-white">{label}</span>
      <div className="flex h-5 flex-1 items-center border border-[#1eaaad] bg-white text-[14px] text-black">
        <span className="flex-1">{value}</span>
        <span className="mt-0.5 flex h-[17px] w-4 items-center justify-center border-b-2 border-r-2 border-[#8a8a8a]">
          <svg width="7" height="4" viewBox="0 0 8 4"><path d="M0 0h8L4 4z" fill="#555" /></svg>
        </span>
      </div>
    </div>
  );
}

const FileRow = ({ label, file }: { label: string; file: string }) => (
  <div className="flex h-[23px] items-center font-['Liberation_Sans',sans-serif] text-[14px]">
    <span className="w-[63px] text-white">{label}</span>
    <span className="flex h-[22px] w-[401px] items-center rounded-[5px] border border-[#1eaaad] bg-white pl-0.5 text-black">C:/Users/Lars_Goray/Desktop/example/{file}.gpkg</span>
    <span className="ml-[7px] flex h-[23px] w-[23px] items-center justify-center rounded-[9px] border border-[#0b5a68] bg-[#1eaaad] pb-px font-bold text-white">...</span>
  </div>
);

function Dialog() {
  return (
    <section className="absolute left-[664px] top-[170px] flex h-[674px] w-[593px] flex-col overflow-visible rounded-lg border border-[#b9b9b9] bg-[#01212d] shadow-[0_28px_34px_0px_rgba(0,0,0,0.170),0_0_18px_rgba(0,0,0,0.080)]">
      <header className="flex h-[30px] shrink-0 items-center rounded-t-[7px] bg-[#f3f3f3] pl-2">
        <QLogo s={16} />
        <span className="ml-[5px] flex-1 text-[12px] tracking-[-0.180px] text-[#8a8a8a]">Heat Net Tool</span>
        <svg width="11" height="11" viewBox="0 0 11 11" className="mr-[10px]" stroke="#808080"><path d="M.5.500l10 10M10.500.500l-10 10" /></svg>
      </header>
      <div className="flex min-h-0 flex-1 pb-[11px] pl-5 pr-[11px] pt-[11px]">
        <div className="mr-[9px] flex w-[538px] flex-col overflow-hidden pt-[9px] font-['DejaVu_Sans_Condensed',sans-serif]">
          <div className="flex h-[22px] gap-px">
            {TABS.map(([t, w], i) => (
              <span key={t} className={`${w} flex shrink-0 items-center justify-center whitespace-nowrap rounded-[4px] border border-[#1eaaad] pt-px text-[12.650px] ${i === 1 ? "bg-[#1eaaad] text-[#d9ffff]" : "bg-white text-black"}`}>{t}</span>
            ))}
          </div>
          <div className="flex min-h-0 flex-1 flex-col overflow-hidden rounded-t-[3px] border-x-2 border-t-2 border-[#1eaaad] px-[9px] pt-[9px]">
            <div className="h-[210px] shrink-0 rounded-[5px] border border-[#1eaaad] bg-[#03364a] pl-1 pt-[5px] text-[12.750px] leading-4 text-white">
              <p className="text-[12.860px] font-bold">The download application is currently optimized for NRW, Germany</p>
              <p className="mt-4 whitespace-nowrap">
                You can select wether you want to download the shape files of a city or a single district.<br />
                The district or city name can be chosen with the corresponding combo box (press a<br />
                letter on your keyboard to jump at the position of that letter in the list). Finally you can<br />
                choose directories for the GIS files and start the download by pressing 'Start<br />
                Download'.
              </p>
              <p className="mt-3">House perimeters and streets are downloaded from:<br /><span className="text-[13px]">https://www.opengeodata.nrw.de/produkte/umwelt_klima/klima/kwp/</span></p>
              <p className="mt-3">Parcels are downloaded from:<br /><span className="text-[13.080px]">https://www.wfs.nrw.de/geobasis/wfs_nw_inspire-flurstuecke_alkis</span></p>
            </div>
            <div className="mt-1.5 flex h-[97px] shrink-0 flex-col gap-1.5 rounded-[5px] border border-[#1eaaad] bg-[#03364a] px-[9px] pt-[9px]">
              <Header t="Choose a city or a single district" />
              <Combo label="City" value="Steinfurt" />
              <Combo label="District" value="Burgsteinfurt" on />
            </div>
            <div className="mt-1.5 flex h-[139px] shrink-0 flex-col rounded-[5px] border border-[#1eaaad] bg-[#03364a] px-[9px] pt-[9px]">
              <Header t="Set Directories for the shape files" />
              <div className="mt-[7px] flex flex-col gap-2">
                <FileRow label="Streets" file="streets" />
                <FileRow label="Parcels" file="parcels" />
                <FileRow label="Buildings" file="buildings" />
              </div>
            </div>
            <div className="mx-px mt-[6px] flex h-5 shrink-0 items-center justify-center rounded-[9px] bg-[#1eaaad] pt-px font-['Liberation_Sans',sans-serif] text-[13.770px] font-bold text-white">Start Download</div>
            <div className="mt-[7px] flex h-5 shrink-0 items-center justify-center rounded-sm border border-[#b0b0b0] bg-white pt-px text-[9.500px] text-black">0%</div>
            <div className="mt-16 h-10 shrink-0 rounded-[5px] border border-[#1eaaad] bg-[#03364a]" />
          </div>
        </div>
        <div className="flex w-[14px] shrink-0 flex-col bg-[#e3e3e3]">
          <ScrollArrow />
          <div className="h-[451px] border-b border-[#b6b6b6] bg-white" />
          <div className="flex-1" />
          <ScrollArrow down />
        </div>
      </div>
      <div className="absolute left-[13px] top-[527px] h-[62px] w-[546px] border-[8px] border-[#ed1c24]/64" />
    </section>
  );
}

/* ---------- page ---------- */

export default function App() {
  return (
    <div className="relative flex h-[1032px] w-[1920px] flex-col overflow-hidden bg-[#f0f0f0] font-['Open_Sans',sans-serif]">
      <header className="flex h-[23px] shrink-0 items-center bg-[#f3f3f3] pl-0.5">
        <QLogo s={16} />
        <span className="ml-1.5 flex-1 text-[11.500px] tracking-[-0.150px] text-[#858585]">*example_project — QGIS</span>
        <svg width="102" height="12" viewBox="0 0 102 12" className="mb-0.5 mr-[19px]" fill="none" stroke="#7a7a7a">
          <path d="M0 6.500h10M91 1l10 10M101 1L91 11" />
          <rect x="45.500" y="3" width="7.500" height="7.500" rx="1.500" />
          <path d="M48 1h5q2 0 2 2v5" />
        </svg>
      </header>
      <nav className="flex h-5 shrink-0 items-center bg-[#f0f0f0] pl-[10.500px] text-[11.500px] tracking-[-0.160px] text-[#979797]">
        {MENU.map(([t, u, w]) => (
          <span key={t} className={`${w} shrink-0`}>{t.slice(0, u)}<span className="underline underline-offset-2">{t[u]}</span>{t.slice(u + 1)}</span>
        ))}
      </nav>
      <div className="h-px shrink-0 bg-[#d4d4d4]" />
      <Bar>
        <Tools spec="newFile open save layout layouts style | #hand !panSel zoomIn zoomOut zoomFull !zoomSel !zoomLayer !zoomNative zoomLast !zoomNext newMap map3d bookmark bookmarks clock refresh | !select> !selectVal> deselect> selectLoc> | identify !abacus gear sigma !table> measure> tip !run> | gps !target / targetBox !targetAdd !nodesStar !trackClean / info wrench" />
      </Bar>
      <Bar>
        <Tools spec="dataSrc geopkg shp spatialite memory mesh virtual | !pencils !pencil !saveEdit !line> !points !vertex> !attrs !trash !cut !copy !paste !undo !redo | !tag !pie / tagPin tagRed / !tagG1 !tagG2 !tagG3 !tagG4 !tagG5 | globe | python fheat hammer reload> | help" />
        <Handle wide />
        <Handle wide />
        <Tools spec="magnet !snapAll #!snapPts" />
        <span className="flex h-5 w-[80.500px] shrink-0 items-center rounded-[3px] border border-[#b4b4b4] bg-[#f0f0f0] pl-[4px] pr-1 text-[10px] text-[#5c7fa3]"><span className="flex-1">12</span><UpDown off /></span>
        <span className="ml-[1.500px] flex h-[22px] w-[90px] shrink-0 items-center rounded-[3px] border border-[#c0c0c0] bg-[#f4f4f4] pl-[5px] pr-[7px] text-[10px] text-[#6c7c8c]"><span className="flex-1">px</span><svg width="8" height="4" viewBox="0 0 8 4"><path d="M0 0h8L4 4z" fill="#999" /></svg></span>
        <Tools spec="topo overlap !cross !selfSnap> !trace" />
      </Bar>
      <Bar>
        <Tools spec="!ruler !ptsMove> !blobRot !blobScale !simplify !ring !part !fill !delRing !delPart !reshape !offset !reverse !trim !split !split !merge !align !rotate>" />
      </Bar>
      <div className="flex min-h-0 flex-1">
        <Docks />
        <div className="flex w-1.5 items-center justify-center">
          <svg width="2" height="17" viewBox="0 0 2 17"><path d="M1 0v17" stroke="#aaa" strokeDasharray="1 2" /></svg>
        </div>
        <main className="flex-1 border border-[#b6b6b6] bg-white" />
      </div>
      <footer className="flex h-7 shrink-0 items-center pt-px font-['DejaVu_Sans_Condensed',sans-serif] text-[10.800px] text-black">
        <span className="ml-1 flex h-[22px] w-[200px] items-center rounded-[3px] border border-[#a8a8a8] bg-white pl-2 text-[9.820px] text-[#777]">
          <svg width="13" height="13" viewBox="0 0 13 13" fill="none" stroke="#888" strokeWidth="1.200"><circle cx="5.500" cy="5.500" r="4.500" /><path d="M9 9l3.500 3.500" /></svg>
          <span className="ml-[7px]">Suchmuster (Strg+K)</span>
        </span>
        <span className="ml-[888px] w-[56px]">Koordinate</span>
        <span className="flex h-[22px] w-[91px] items-center justify-center whitespace-pre rounded-[3px] border border-[#b0b0b0] bg-white text-[11px]">-0,805°  1,854°</span>
        <span className="ml-1 w-[29px]">
          <svg width="16" height="16" viewBox="0 0 16 16" fill="#ddd" stroke="#333">
            <ellipse cx="5.500" cy="5" rx="3" ry="4.500" transform="rotate(-45 5.500 5)" />
            <path d="M3 6.500L7 3M5.500 8.500L9 5.500M1 9l4 4M3 13l3 1M10 2l2 2 3-3" fill="none" />
            <ellipse cx="11" cy="11.500" rx="3.500" ry="3" />
            <circle cx="11.500" cy="12" r="1" fill="#333" />
          </svg>
        </span>
        <span className="w-[44px]">Maßstab</span>
        <span className="flex h-[22px] w-[76px] items-center rounded-[3px] border border-[#b0b0b0] bg-white pl-[3px] text-[11px]">
          <span className="flex-1">1:993960</span>
          <span className="flex h-full w-[19px] items-center justify-center border-l border-[#c4c4c4] bg-[#f6f6f6]"><svg width="8" height="4" viewBox="0 0 8 4"><path d="M0 0h8L4 4z" fill="#777" /></svg></span>
        </span>
        <svg width="13" height="16" viewBox="0 0 13 16" className="ml-3 mr-[9px]" fill="none"><path d="M3 8V5q0-4 3.500-4T10 5v3" stroke="#aaa" strokeWidth="1.800" /><rect x=".5" y="7" width="12" height="8" rx="1" fill="#666" /></svg>
        <span className="w-[70px]">Vergrößerung</span>
        <span className="flex h-[20px] w-[81px] items-center rounded-[3px] border border-[#b0b0b0] bg-white pl-1 pr-1 text-[11px]"><span className="flex-1">100%</span><UpDown /></span>
        <span className="ml-[9px] w-[51px]">Drehung</span>
        <span className="flex h-[20px] w-[81px] items-center rounded-[3px] border border-[#b0b0b0] bg-white pl-1 pr-1 text-[11px]"><span className="flex-1">0,0 °</span><UpDown /></span>
        <span className="ml-1.5 mr-[5px]"><Check /></span>
        <span className="w-[60px]">Zeichnen</span>
        <svg width="15" height="15" viewBox="0 0 15 15" className="mr-[2px]" fill="none" stroke="#777"><circle cx="7.500" cy="7.500" r="6.500" fill="#ccc" /><ellipse cx="7.500" cy="7.500" rx="3" ry="6.500" /><path d="M1 5h13M1 10h13M7.500 1v13" /></svg>
        <span className="flex-1">EPSG:4326</span>
        <svg width="16" height="16" viewBox="0 0 16 16" className="mr-[7px]"><path d="M8 1.500c4.500 0 8 2.500 8 6 0 2-1 3.500-2.500 4.500L15 15.500 10 13c-6 1-10-2-10-5.500s3.500-6 8-6z" fill="#666" /></svg>
      </footer>
      <Dialog />
    </div>
  );
}
